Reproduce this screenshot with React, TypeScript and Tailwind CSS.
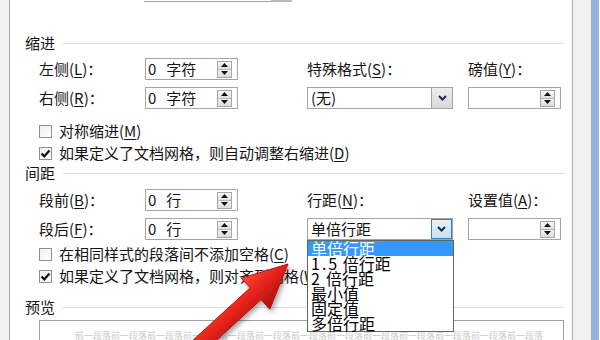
import type { ReactNode } from "react";

const Key = ({ k }: { k: string }) => (
  <>
    (<span className="underline underline-offset-2">{k}</span>)
  </>
);

const Spin = () => (
  <div className="flex h-[17px] w-[15px] flex-col border border-[#a7a7a7]">
    <div className="flex flex-1 items-center justify-center border-b border-[#b5b5b5] bg-linear-to-b from-[#f8f8f8] to-[#e1e1e1]">
      <svg width="7" height="4" viewBox="0 0 7 4">
        <path d="M3.5 0L7 4H0z" fill="#111" />
      </svg>
    </div>
    <div className="flex flex-1 items-center justify-center bg-linear-to-b from-[#f3f3f3] to-[#dcdcdc]">
      <svg width="7" height="4" viewBox="0 0 7 4">
        <path d="M0 0h7L3.5 4z" fill="#111" />
      </svg>
    </div>
  </div>
);

const NumBox = ({ value, unit }: { value?: string; unit?: string }) => (
  <div className="flex h-[22px] w-[93px] items-center border border-[#a5a5a5] bg-white pl-[2px] pr-[5px]">
    <div className="flex-1 text-[15px] leading-[20px]">
      {value && (
        <>
          {value}
          <span className="ml-[10px]">{unit}</span>
        </>
      )}
    </div>
    <Spin />
  </div>
);

const Chevron = () => (
  <svg width="9" height="6" viewBox="0 0 9 6">
    <path d="M1 1l3.5 3.5L8 1" fill="none" stroke="#1c2b44" strokeWidth="2" />
  </svg>
);

const options = ["单倍行距", "1.5 倍行距", "2 倍行距", "最小值", "固定值", "多倍行距"];

const Select = ({ value, open }: { value: string; open?: boolean }) => (
  <div className="relative flex h-[22px] w-[146px] border border-[#a5a5a5] bg-white">
    <div className="flex-1 pl-[3px] text-[15px] leading-[20px]">{value}</div>
    {open ? (
      <div className="flex w-[21px] items-center justify-center border border-[#3c7fb1] bg-linear-to-b from-[#e5f3fb] to-[#c4e0f4]">
        <Chevron />
      </div>
    ) : (
      <div className="flex w-[21px] items-center justify-center border-l border-[#a5a5a5] bg-linear-to-b from-[#eeeeee] to-[#d9d9d9]">
        <Chevron />
      </div>
    )}
    {open && (
      <div className="absolute left-[-1px] top-[21px] z-10 w-[147px] border border-[#646464] bg-white">
        {options.map((o, i) => (
          <div
            key={o}
            className={
              i === 0
                ? "h-[15px] bg-[#3399ff] pl-[3px] text-[16px] leading-[15px] text-white"
                : "h-[15px] pl-[3px] text-[16px] leading-[15px] text-black"
            }
          >
            {o.startsWith("1.5") ? (
              <>
                <span className="tracking-[2px]">1.5</span> 倍行距
              </>
            ) : o.startsWith("2 ") ? (
              <>
                <span className="mr-[6px]">2</span>倍行距
              </>
            ) : (
              o
            )}
          </div>
        ))}
      </div>
    )}
  </div>
);

const Check = ({ checked, children }: { checked?: boolean; children: ReactNode }) => (
  <div className="flex h-[22px] items-center pl-[29px]">
    <div className="flex h-[13px] w-[13px] shrink-0 items-center justify-center border border-[#8f8f8f] bg-linear-to-br from-[#f0f0f0] to-white">
      {checked && (
        <svg width="11" height="11" viewBox="0 0 11 11">
          <path d="M1.5 5.5l2.8 2.8L9.5 2.5" fill="none" stroke="#111" strokeWidth="2.2" />
        </svg>
      )}
    </div>
    <span className="ml-[7px] whitespace-nowrap text-[15px] leading-[20px]">{children}</span>
  </div>
);

const Section = ({ title, className }: { title: string; className: string }) => (
  <div className={`flex h-[18px] items-center pl-[15px] pr-[8px] ${className}`}>
    <span className="text-[15px] leading-[18px]">{title}</span>
    <div className="ml-[8px] h-px flex-1 bg-[#d5dde3]" />
  </div>
);

const Label = ({ children }: { children: ReactNode }) => (
  <div className="whitespace-nowrap text-[15px] leading-[20px]">{children}</div>
);

const grid = "grid grid-cols-[106px_93px_69px_146px_15px_93px] items-center gap-y-[7px] pl-[29px]";

export default function App() {
  return (
    <div className="relative flex h-[340px] w-[600px] overflow-hidden bg-white font-['Noto_Sans_CJK_SC',sans-serif] text-[#141414]">
      <div className="w-[10px] shrink-0 border-r border-[#a9a9a9] bg-[#f0f0f0]" />

      <div className="relative w-[562px] shrink-0">
        <div className="ml-[134px] flex h-[2px] w-[148px]">
          <div className="flex-1 border-b border-[#a5a5a5]" />
          <div className="w-[21px] bg-[#b9b9b9]" />
        </div>

        <Section title="缩进" className="mt-[32px]" />
        <div className={`${grid} mt-[6px]`}>
          <Label>
            左侧<Key k="L" />：
          </Label>
          <NumBox value="0" unit="字符" />
          <div />
          <Label>
            特殊格式<Key k="S" />：
          </Label>
          <div />
          <Label>
            磅值<Key k="Y" />：
          </Label>

          <Label>
            右侧<Key k="R" />：
          </Label>
          <NumBox value="0" unit="字符" />
          <div />
          <Select value="(无)" />
          <div />
          <NumBox />
        </div>

        <div className="mt-[11px]">
          <Check>
            对称缩进<Key k="M" />
          </Check>
          <Check checked>
            如果定义了文档网格，则自动调整右缩进<Key k="D" />
          </Check>
        </div>

        <Section title="间距" className="" />
        <div className={`${grid} mt-[7px]`}>
          <Label>
            段前<Key k="B" />：
          </Label>
          <NumBox value="0" unit="行" />
          <div />
          <Label>
            行距<Key k="N" />：
          </Label>
          <div />
          <Label>
            设置值<Key k="A" />：
          </Label>

          <Label>
            段后<Key k="F" />：
          </Label>
          <NumBox value="0" unit="行" />
          <div />
          <Select value="单倍行距" open />
          <div />
          <NumBox />
        </div>

        <div className="mt-[3px]">
          <Check>
            在相同样式的段落间不添加空格<Key k="C" />
          </Check>
          <Check checked>
            如果定义了文档网格，则对齐到网格<Key k="W" />
          </Check>
        </div>

        <Section title="预览" className="mt-[11px]" />
        <div className="ml-[29px] mt-[4px] h-[40px] w-[525px] overflow-hidden border border-[#a0a0a0] pl-[35px] pt-[10px]">
          <div className="whitespace-nowrap text-[9px] leading-[10px] text-[#c8c8c8]">
            前一段落前一段落前一段落前一段落前一段落前一段落前一段落前一段落前一段落前一段落前一段落前一段落前一段落
          </div>
        </div>
      </div>

      <div className="flex shrink-0">
        <div className="w-[20px] border-x border-[#a9a9a9] bg-[#f0f0f0]" />
        <div className="w-[7px] bg-[#8fb2e0]" />
      </div>

      <svg className="pointer-events-none absolute inset-0" width="600" height="340" viewBox="0 0 600 340">
        <defs>
          <linearGradient id="red" gradientUnits="userSpaceOnUse" x1="241" y1="278" x2="270" y2="309">
            <stop offset="0" stopColor="#ff4a3a" />
            <stop offset="0.45" stopColor="#e8231c" />
            <stop offset="1" stopColor="#a80f0c" />
          </linearGradient>
          <filter id="sh" x="-20%" y="-20%" width="140%" height="140%">
            <feDropShadow dx="2" dy="3" stdDeviation="2.5" floodColor="#000" floodOpacity="0.35" />
          </filter>
        </defs>
        <polygon
          points="288,264 269.8,309.2 261,299.6 182.8,371.2 172,359.4 250.2,287.8 241.4,278.2"
          fill="url(#red)"
          stroke="#b8120e"
          strokeWidth="1"
          filter="url(#sh)"
        />
      </svg>
    </div>
  );
}
